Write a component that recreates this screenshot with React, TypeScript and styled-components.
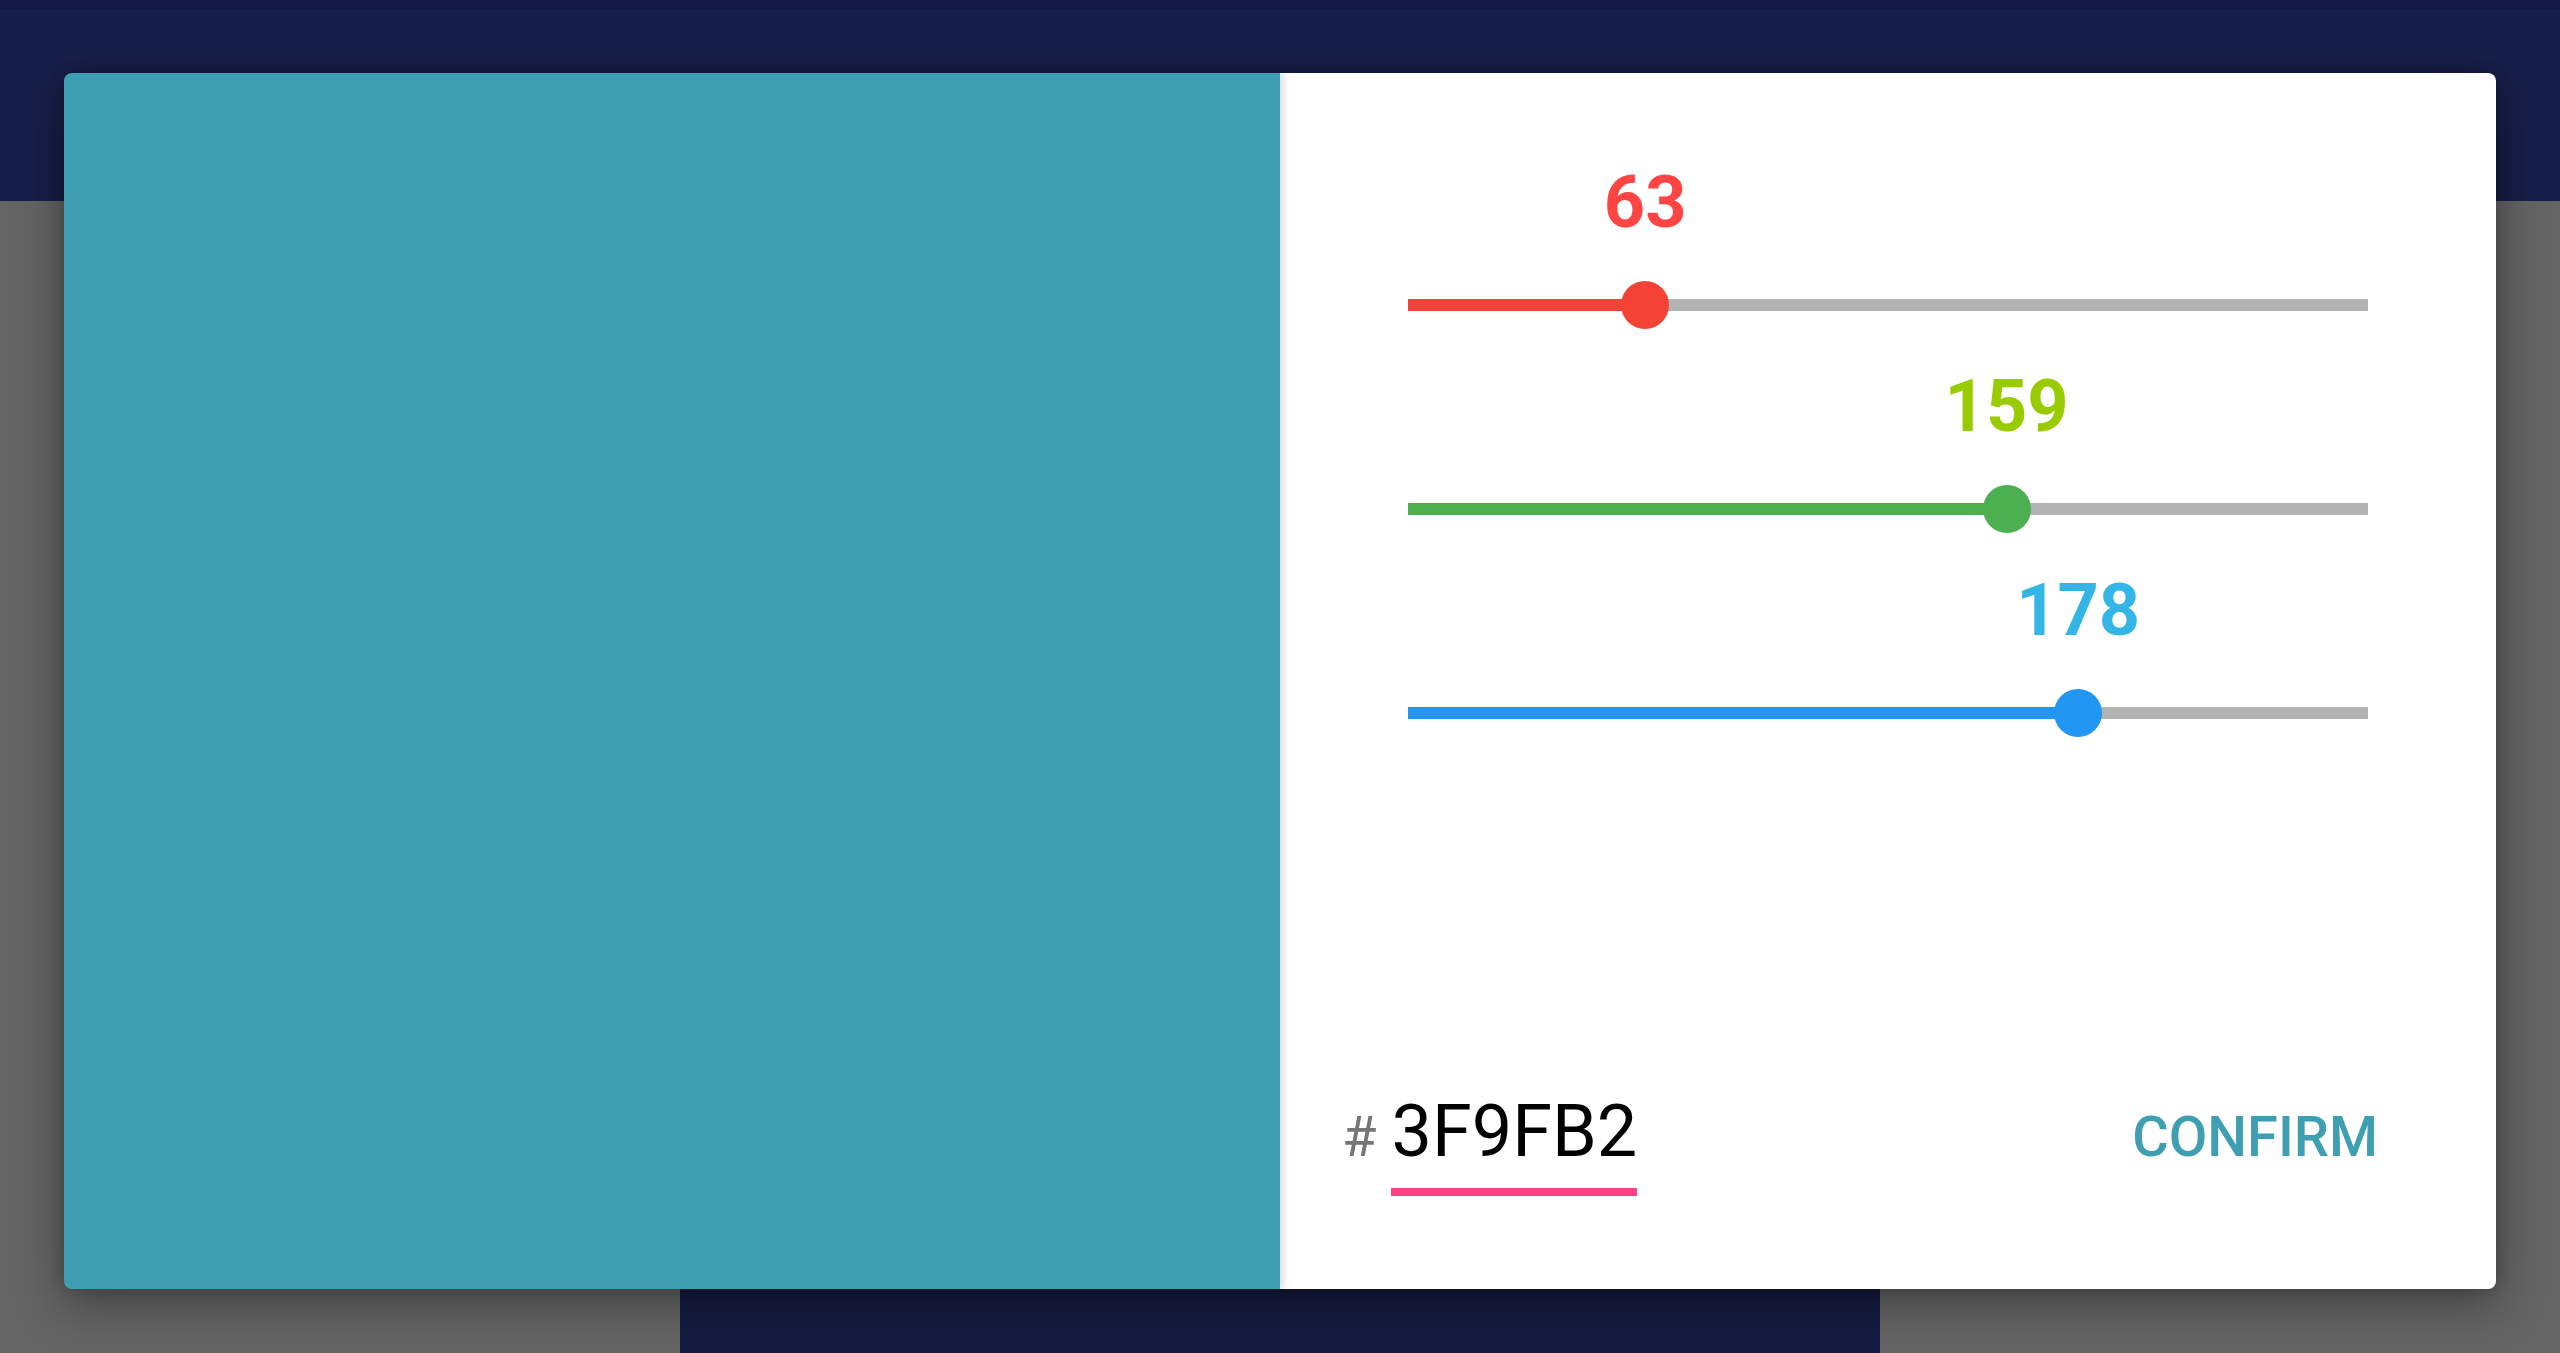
import styled, { createGlobalStyle } from 'styled-components';

const GlobalStyle = createGlobalStyle`
  html, body {
    margin: 0;
    padding: 0;
  }
  body {
    font-family: Roboto, "Noto Sans", sans-serif;
    background: #646464;
    overflow: hidden;
  }
  * {
    box-sizing: border-box;
  }
`;

const Page = styled.div`
  display: flex;
  flex-direction: column;
  height: 100vh;
`;

const StatusBar = styled.div`
  height: 9px;
  background: #131943;
`;

const AppBar = styled.div`
  height: 192px;
  background: #171e48;
`;

const Content = styled.div`
  flex: 1;
  display: flex;
  justify-content: center;
  padding-top: 80px;
`;

const Card = styled.div`
  width: 1200px;
  background: #151b40;
`;

const Overlay = styled.div`
  position: fixed;
  inset: 0;
  display: flex;
  justify-content: center;
  align-items: flex-start;
  padding-top: 73px;
`;

const Dialog = styled.div`
  width: 2432px;
  height: 1216px;
  display: flex;
  border-radius: 8px;
  overflow: hidden;
  box-shadow: 0 14px 48px rgba(0, 0, 0, 0.35), 0 0 20px rgba(0, 0, 0, 0.2);
`;

const Preview = styled.div<{ $color: string }>`
  width: 1216px;
  flex-shrink: 0;
  background: ${(p) => p.$color};
  position: relative;
  z-index: 1;
  box-shadow: 3px 0 8px rgba(0, 0, 0, 0.16);
`;

const Panel = styled.div`
  flex: 1;
  background: #ffffff;
  display: flex;
  flex-direction: column;
`;

const Sliders = styled.div`
  padding: 28px 128px 0;
`;

const SliderRow = styled.div`
  height: 204px;
  padding-top: 198px;
`;

const Track = styled.div`
  position: relative;
  height: 12px;
  background: #b3b3b3;
`;

const Fill = styled.div<{ $color: string }>`
  height: 100%;
  background: ${(p) => p.$color};
`;

const Thumb = styled.div<{ $color: string }>`
  position: absolute;
  top: 50%;
  width: 48px;
  height: 48px;
  border-radius: 50%;
  background: ${(p) => p.$color};
  transform: translate(-50%, -50%);
`;

const Value = styled.div<{ $color: string }>`
  position: absolute;
  bottom: calc(100% + 60px);
  transform: translateX(-50%);
  font: 700 72px/1 Roboto, sans-serif;
  color: ${(p) => p.$color};
  white-space: nowrap;
`;

const Footer = styled.div`
  margin-top: auto;
  display: flex;
  align-items: baseline;
  justify-content: space-between;
  padding: 0 118px 93px 62px;
`;

const HexField = styled.div`
  display: flex;
  align-items: baseline;
`;

const Hash = styled.span`
  font: 400 56px/1 Roboto, sans-serif;
  color: #757575;
  margin-right: 15px;
`;

const HexValue = styled.span`
  font: 400 72px/1 Roboto, sans-serif;
  color: #000000;
  padding-bottom: 20px;
  border-bottom: 8px solid #ff4081;
`;

const ConfirmButton = styled.button<{ $color: string }>`
  font: 500 56px/1 Roboto, sans-serif;
  color: ${(p) => p.$color};
  background: none;
  border: none;
  padding: 0;
  text-transform: uppercase;
`;

type Channel = { value: number; track: string; label: string };

const channels: Channel[] = [
  { value: 63, track: '#f44336', label: '#ff4444' },
  { value: 159, track: '#4caf50', label: '#99cc00' },
  { value: 178, track: '#2196f3', label: '#33b5e5' },
];

const toHex = (n: number) => n.toString(16).padStart(2, '0').toUpperCase();

const App: React.FC = () => {
  const hex = channels.map((c) => toHex(c.value)).join('');
  const color = '#' + hex;

  return (
    <>
      <GlobalStyle />
      <Page>
        <StatusBar />
        <AppBar />
        <Content>
          <Card />
        </Content>
      </Page>
      <Overlay>
        <Dialog>
          <Preview $color={color} />
          <Panel>
            <Sliders>
              {channels.map((c, index) => {
                const pct = (c.value / 255) * 100 + '%';
                return (
                  <SliderRow key={index}>
                    <Track>
                      <Fill $color={c.track} style={{ width: pct }} />
                      <Thumb $color={c.track} style={{ left: pct }} />
                      <Value $color={c.label} style={{ left: pct }}>
                        {c.value}
                      </Value>
                    </Track>
                  </SliderRow>
                );
              })}
            </Sliders>
            <Footer>
              <HexField>
                <Hash>#</Hash>
                <HexValue>{hex}</HexValue>
              </HexField>
              <ConfirmButton $color={color}>Confirm</ConfirmButton>
            </Footer>
          </Panel>
        </Dialog>
      </Overlay>
    </>
  );
};

export default App;
